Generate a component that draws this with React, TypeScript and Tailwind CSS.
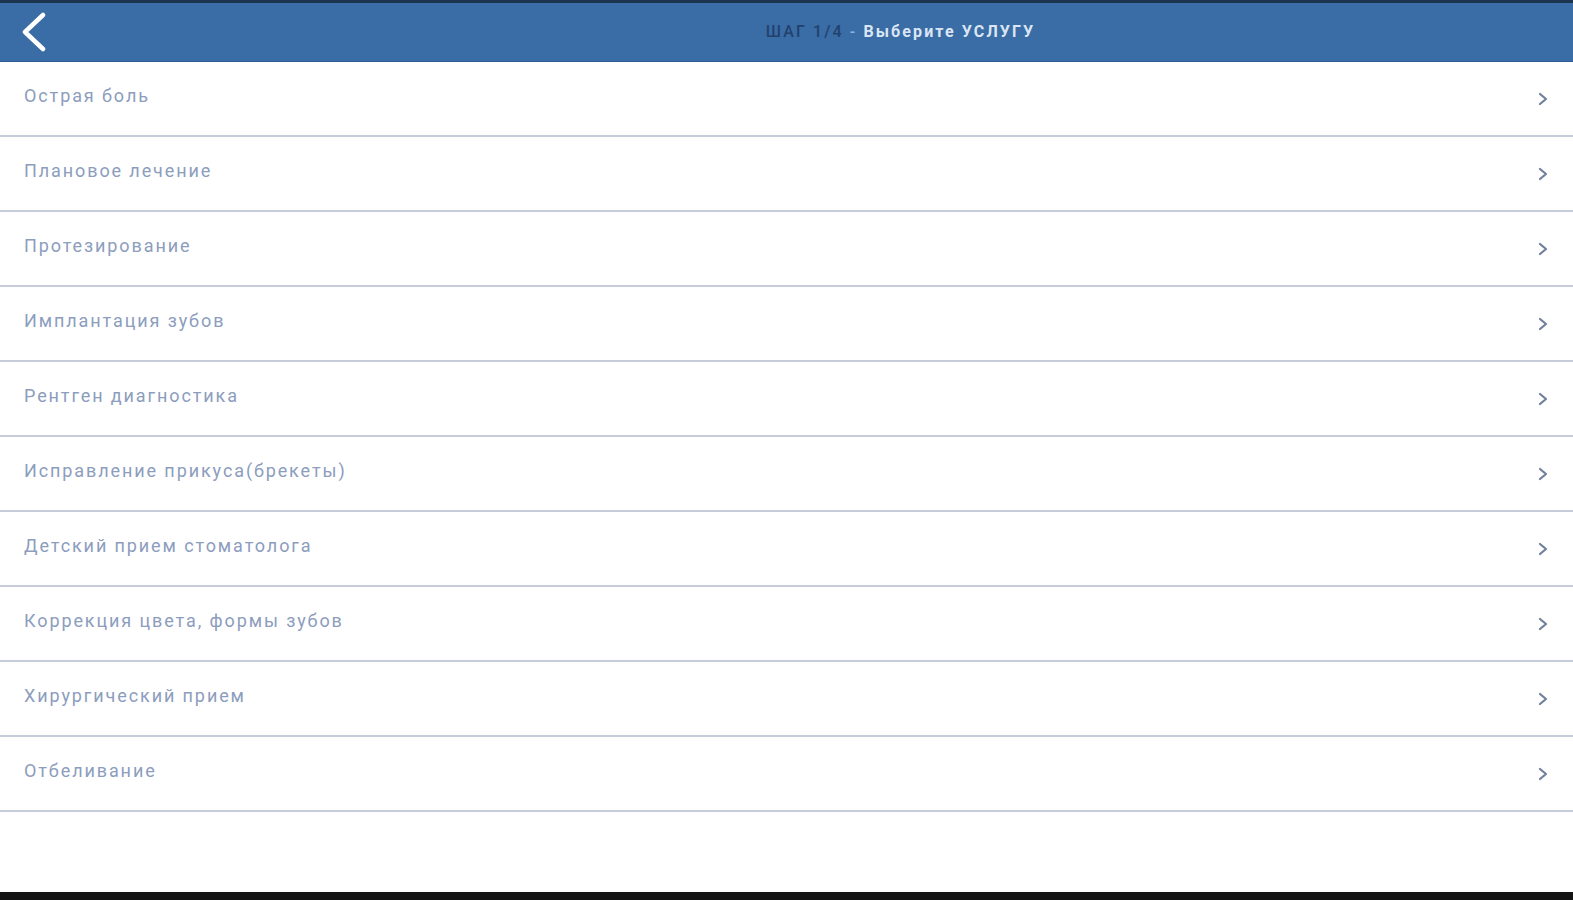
import React from "react";

const items = [
  "Острая боль",
  "Плановое лечение",
  "Протезирование",
  "Имплантация зубов",
  "Рентген диагностика",
  "Исправление прикуса(брекеты)",
  "Детский прием стоматолога",
  "Коррекция цвета, формы зубов",
  "Хирургический прием",
  "Отбеливание",
];

export default function App() {
  return (
    <div className="h-[900px] w-full flex flex-col bg-white overflow-hidden" style={{ fontFamily: "Roboto, 'Noto Sans', sans-serif" }}>
      <div className="h-[3px] bg-[#1d3350]" />
      <header className="h-[59px] bg-[#3a6ca6] flex items-center relative border-b border-[#2f5e96]">
        <button className="absolute left-[18px] top-[8px] w-[32px] h-[42px] flex items-center justify-center">
          <svg width="30" height="40" viewBox="0 0 30 40" fill="none">
            <path d="M24 3 L6 20 L24 37" stroke="white" strokeWidth="4.5" strokeLinecap="round" strokeLinejoin="round" />
          </svg>
        </button>
        <div className="flex-1 flex justify-center pl-[228px] text-[16px] tracking-[2.1px]">
          <span className="text-[#22426e] font-medium">ШАГ 1/4</span>
          <span className="text-[#8fb0d8] font-medium">&nbsp;-&nbsp;</span>
          <span className="text-[#dbe6f4] font-bold">Выберите УСЛУГУ</span>
        </div>
      </header>
      <div className="flex-1 flex flex-col">
        {items.map((t) => (
          <div key={t} className="h-[75px] shrink-0 flex border-b-[2.5px] border-[#c7ccda] relative">
            <div className="pl-[24px] pt-[20px] text-[18px] text-[#8c9dbd] tracking-[1.9px]">{t}</div>
            <div className="absolute right-[24px] top-0 bottom-0 flex items-center">
              <svg width="12" height="14" viewBox="0 0 12 14" fill="none">
                <path d="M3 2 L9 7 L3 12" stroke="#6f7f9c" strokeWidth="2.2" strokeLinecap="round" strokeLinejoin="round" />
              </svg>
            </div>
          </div>
        ))}
      </div>
      <div className="h-[8px] bg-[#141414]" />
    </div>
  );
}
